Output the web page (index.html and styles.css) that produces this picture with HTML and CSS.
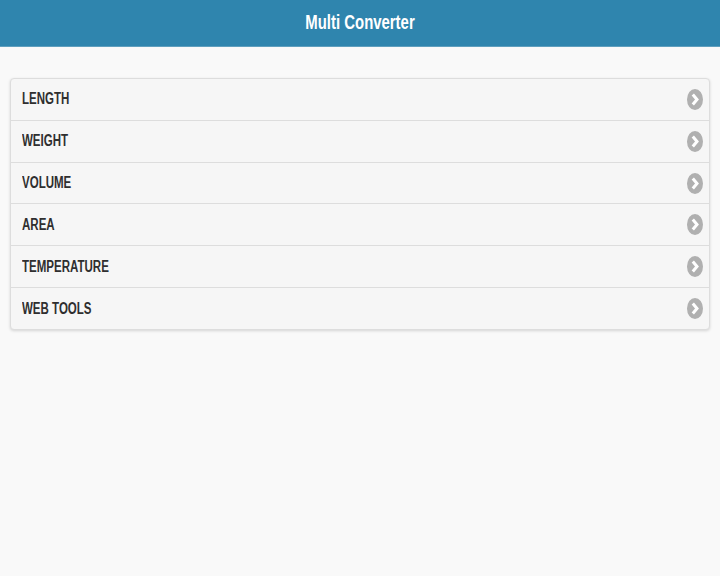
FILE: index.html
```html
<!DOCTYPE html>
<html lang="en">
<head>
<meta charset="utf-8">
<title>Multi Converter</title>
<link rel="stylesheet" href="styles.css">
</head>
<body>
<header class="header"><h1 class="title">Multi Converter</h1></header>
<main class="content">
<ul class="list">
<li class="row"><a class="label" href="#">LENGTH</a><svg class="chev" viewBox="0 0 16 21"><ellipse cx="8" cy="10.5" rx="8" ry="10.5" fill="#b0b0b0"/><path d="M5.8 5.5 10 10.5 5.8 15.5" fill="none" stroke="#fff" stroke-width="3"/></svg></li>
<li class="row"><a class="label" href="#">WEIGHT</a><svg class="chev" viewBox="0 0 16 21"><ellipse cx="8" cy="10.5" rx="8" ry="10.5" fill="#b0b0b0"/><path d="M5.8 5.5 10 10.5 5.8 15.5" fill="none" stroke="#fff" stroke-width="3"/></svg></li>
<li class="row"><a class="label" href="#">VOLUME</a><svg class="chev" viewBox="0 0 16 21"><ellipse cx="8" cy="10.5" rx="8" ry="10.5" fill="#b0b0b0"/><path d="M5.8 5.5 10 10.5 5.8 15.5" fill="none" stroke="#fff" stroke-width="3"/></svg></li>
<li class="row"><a class="label" href="#">AREA</a><svg class="chev" viewBox="0 0 16 21"><ellipse cx="8" cy="10.5" rx="8" ry="10.5" fill="#b0b0b0"/><path d="M5.8 5.5 10 10.5 5.8 15.5" fill="none" stroke="#fff" stroke-width="3"/></svg></li>
<li class="row"><a class="label" href="#">TEMPERATURE</a><svg class="chev" viewBox="0 0 16 21"><ellipse cx="8" cy="10.5" rx="8" ry="10.5" fill="#b0b0b0"/><path d="M5.8 5.5 10 10.5 5.8 15.5" fill="none" stroke="#fff" stroke-width="3"/></svg></li>
<li class="row"><a class="label" href="#">WEB TOOLS</a><svg class="chev" viewBox="0 0 16 21"><ellipse cx="8" cy="10.5" rx="8" ry="10.5" fill="#b0b0b0"/><path d="M5.8 5.5 10 10.5 5.8 15.5" fill="none" stroke="#fff" stroke-width="3"/></svg></li>
</ul>
</main>
</body>
</html>
```
FILE: styles.css
```css
html, body {
  margin: 0;
  height: 100%;
  background: #f9f9f9;
  font-family: "Liberation Sans", Arial, sans-serif;
  overflow: hidden;
}
.header {
  height: 47px;
  box-sizing: border-box;
  padding-bottom: 2px;
  background: #2f85ae;
  border-bottom: 1px solid #5f9fbe;
  display: flex;
  align-items: center;
  justify-content: center;
}
.title {
  margin: 0;
  font-size: 21px;
  font-weight: 700;
  color: #fff;
  transform: scaleX(0.71);
  white-space: nowrap;
}
.content {
  padding: 31px 10px 0;
}
.list {
  list-style: none;
  margin: 0;
  padding: 0;
  height: 252px;
  display: flex;
  flex-direction: column;
  box-sizing: border-box;
  background: #f6f6f6;
  border: 1px solid #ddd;
  border-radius: 4px;
  box-shadow: 0 1px 3px rgba(0, 0, 0, 0.15);
}
.row {
  flex: 1;
  display: flex;
  align-items: center;
  justify-content: space-between;
  padding: 0 6px 0 11px;
  border-bottom: 1px solid #ddd;
}
.row:last-child {
  border-bottom: 0;
}
.label {
  font-size: 16px;
  font-weight: 700;
  color: #2f2f2f;
  text-decoration: none;
  transform: scaleX(0.72);
  transform-origin: left center;
  white-space: nowrap;
}
.chev {
  width: 16px;
  height: 21px;
  flex: none;
}
```
